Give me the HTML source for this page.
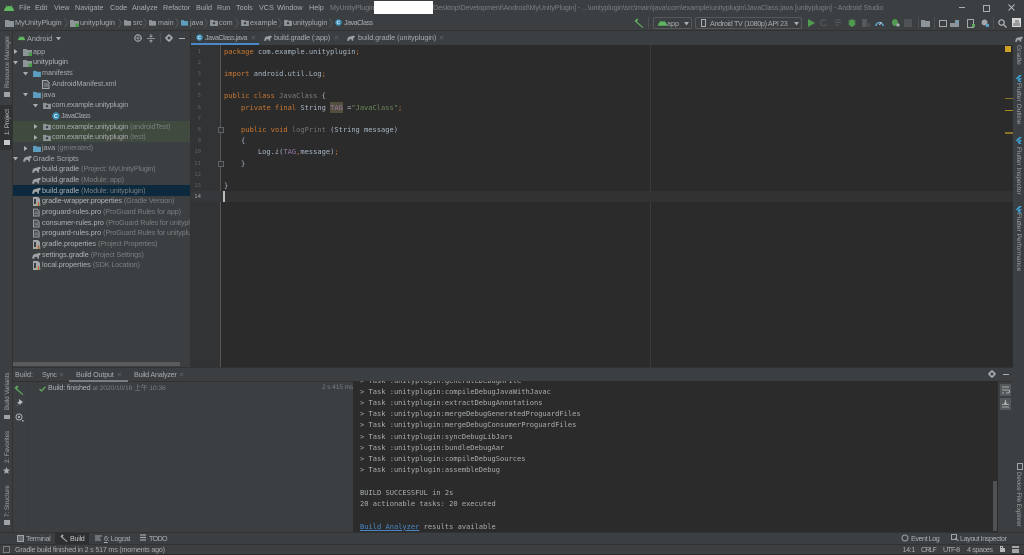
<!DOCTYPE html>
<html><head><meta charset="utf-8">
<style>
html,body{margin:0;padding:0;width:1024px;height:555px;overflow:hidden;background:#3c3f41}
#r{position:relative;width:1024px;height:555px;overflow:hidden;background:#3c3f41;font-family:"Liberation Sans","Noto Sans CJK TC",sans-serif;font-size:7.2px;color:#a9adaf;filter:blur(.35px)}
.b{position:absolute}
.t{position:absolute;white-space:nowrap;line-height:10px;height:10px}
.g{color:#7b7f81;letter-spacing:-.12px}
.m{position:absolute;white-space:pre;font-family:"DejaVu Sans Mono",monospace;font-size:7.05px;line-height:11.2px;color:#a9b7c6}
.k{color:#cc7832}.s{color:#6a8759}.p{color:#9876aa}
.v{position:absolute;white-space:nowrap;line-height:10px;transform-origin:0 0;font-size:6.6px;color:#a0a4a6}
.l{font-size:6.15px;left:2.5px;transform:rotate(-90deg)}
.n{position:absolute;left:191px;width:10px;text-align:right;font-family:"DejaVu Sans Mono",monospace;font-size:5.6px;line-height:11.2px;color:#5f6365}
svg{position:absolute;overflow:visible}
</style></head><body><div id="r">
<svg width="0" height="0" style="position:absolute"><defs>
<symbol id="fo" viewBox="0 0 9 8"><path d="M0 1h3.5l1 1H9v6H0z" fill="#8e9598"/></symbol>
<symbol id="fb" viewBox="0 0 9 8"><path d="M0 1h3.5l1 1H9v6H0z" fill="#5c9dc0"/></symbol>
<symbol id="mo" viewBox="0 0 9 8"><path d="M0 1h3.5l1 1H9v6H0z" fill="#8e9598"/><rect x="5.5" y="4.5" width="3.5" height="3.5" fill="#4c9a4c"/></symbol>
<symbol id="pk" viewBox="0 0 9 8"><path d="M0 1h3.5l1 1H9v6H0z" fill="#8e9598"/><circle cx="4.5" cy="4.8" r="1.4" fill="#3c3f41"/></symbol>
<symbol id="c" viewBox="0 0 8 8"><circle cx="4" cy="4" r="3.7" fill="#3f93b8"/><path d="M5.3 3A1.6 1.6 0 1 0 5.3 5" stroke="#d8e6ee" stroke-width=".9" fill="none"/></symbol>
<symbol id="e" viewBox="0 0 10 7"><path d="M0 7 1 3.5Q2 1.5 5 1.5 7 1 8 .5L10 1.5 9 3 8 3.4 7.6 7H6L5.8 5H3L2.6 7z" fill="#9ea3a6"/></symbol>
<symbol id="pr" viewBox="0 0 8 9"><path d="M0 0h5l2 2v7H0z" fill="#a3a7a9"/><rect x="3.6" y="6" width="1" height="3" fill="#c9a24a"/><rect x="5" y="5" width="1" height="4" fill="#b85a50"/><rect x="6.4" y="6.5" width="1" height="2.5" fill="#5a9e5a"/><rect x="1" y="2" width="2" height="5" fill="#3c3f41"/></symbol>
<symbol id="f" viewBox="0 0 8 9"><path d="M.5.5h4.5l2 2v6H.5z" fill="#4d5153" stroke="#a3a7a9"/><path d="M2 4h4M2 6h4" stroke="#a3a7a9" stroke-width=".7"/></symbol>
<symbol id="a" viewBox="0 0 10 6"><path d="M0 6A5 5 0 0 1 10 6z" fill="#5fb760"/><path d="M2 .5 3 2M8 .5 7 2" stroke="#5fb760" stroke-width=".7"/></symbol>
<symbol id="h" viewBox="0 0 10 10"><path d="M.5 3 3 .5l1.5 1L3 3.5l6.5 6-1 .5L2 4.5z" fill="currentColor"/></symbol>
<symbol id="fl" viewBox="0 0 8 8"><path d="M5 0h3L2.5 5.2 1 3.8zM5 3.6h3L5.3 6.3 8 8H5L3.4 6.4 3 5.6z" fill="#3ea5d9"/></symbol>
<symbol id="x" viewBox="0 0 6 6"><path d="M1 1l4 4M5 1 1 5" stroke="#5f6365" stroke-width=".8"/></symbol>
<symbol id="ch" viewBox="0 0 4 10"><path d="M.5 .5 3.5 5 .5 9.5" stroke="#5a5e60" stroke-width=".7" fill="none"/></symbol>
<symbol id="rt" viewBox="0 0 5 5"><path d="M1 0 4.5 2.5 1 5z" fill="#a9adaf"/></symbol>
<symbol id="dn" viewBox="0 0 5 5"><path d="M0 1h5L2.5 4.5z" fill="#a9adaf"/></symbol>
</defs></svg>

<!-- Title bar -->
<svg style="left:4px;top:5px" width="10" height="6"><use href="#a"/></svg>
<div class="t" style="left:19px;top:3px">File</div>
<div class="t" style="left:35px;top:3px">Edit</div>
<div class="t" style="left:54px;top:3px">View</div>
<div class="t" style="left:75px;top:3px">Navigate</div>
<div class="t" style="left:110px;top:3px">Code</div>
<div class="t" style="left:132px;top:3px">Analyze</div>
<div class="t" style="left:163px;top:3px">Refactor</div>
<div class="t" style="left:196px;top:3px">Build</div>
<div class="t" style="left:217px;top:3px">Run</div>
<div class="t" style="left:236px;top:3px">Tools</div>
<div class="t" style="left:259px;top:3px">VCS</div>
<div class="t" style="left:277px;top:3px">Window</div>
<div class="t" style="left:309px;top:3px">Help</div>
<div class="t g" style="left:330px;top:3px">MyUnityPlugin</div>
<div class="b" style="left:374px;top:1px;width:59px;height:13px;background:#fff"></div>
<div class="t g" style="left:433px;top:3px;letter-spacing:-.105px">Desktop\Development\Android\MyUnityPlugin] - ...\unityplugin\src\main\java\com\example\unityplugin\JavaClass.java [unityplugin] - Android Studio</div>
<div class="b" style="left:959px;top:7px;width:6px;height:1px;background:#a9adaf"></div>
<div class="b" style="left:983px;top:5px;width:5px;height:5px;border:1px solid #a9adaf"></div>
<svg style="left:1008px;top:4px" width="7" height="7" viewBox="0 0 7 7"><path d="M.5.5l6 6M6.5.5l-6 6" stroke="#b4b8ba"/></svg>

<!-- Nav bar -->
<div class="b" style="left:0;top:30px;width:1024px;height:1px;background:#323232"></div>
<svg style="left:5px;top:19px" width="9" height="8"><use href="#fo"/></svg>
<div class="t" style="left:15px;top:18px;font-size:7.3px">MyUnityPlugin</div>
<svg style="left:64px;top:18px" width="4" height="10"><use href="#ch"/></svg>
<svg style="left:70px;top:19px" width="9" height="8"><use href="#mo"/></svg>
<div class="t" style="left:80px;top:18px;font-size:7.3px">unityplugin</div>
<svg style="left:118px;top:18px" width="4" height="10"><use href="#ch"/></svg>
<svg style="left:124px;top:19px" width="7" height="7"><use href="#fo"/></svg>
<div class="t" style="left:133px;top:18px">src</div>
<svg style="left:143px;top:18px" width="4" height="10"><use href="#ch"/></svg>
<svg style="left:149px;top:19px" width="7" height="7"><use href="#fo"/></svg>
<div class="t" style="left:158px;top:18px">main</div>
<svg style="left:175px;top:18px" width="4" height="10"><use href="#ch"/></svg>
<svg style="left:181px;top:19px" width="7" height="7"><use href="#fb"/></svg>
<div class="t" style="left:190px;top:18px">java</div>
<svg style="left:204px;top:18px" width="4" height="10"><use href="#ch"/></svg>
<svg style="left:210px;top:19px" width="8" height="7"><use href="#pk"/></svg>
<div class="t" style="left:219px;top:18px">com</div>
<svg style="left:235px;top:18px" width="4" height="10"><use href="#ch"/></svg>
<svg style="left:241px;top:19px" width="8" height="7"><use href="#pk"/></svg>
<div class="t" style="left:250px;top:18px">example</div>
<svg style="left:278px;top:18px" width="4" height="10"><use href="#ch"/></svg>
<svg style="left:284px;top:19px" width="8" height="7"><use href="#pk"/></svg>
<div class="t" style="left:293px;top:18px">unityplugin</div>
<svg style="left:329px;top:18px" width="4" height="10"><use href="#ch"/></svg>
<svg style="left:335px;top:19px" width="7" height="7"><use href="#c"/></svg>
<div class="t" style="left:344px;top:18px;letter-spacing:-.5px">JavaClass</div>

<!-- Toolbar right -->
<svg style="left:634px;top:18px;color:#5fa85f" width="10" height="10"><use href="#h"/></svg>
<div class="b" style="left:648px;top:17px;width:1px;height:12px;background:#4d5153"></div>
<div class="b" style="left:653px;top:17px;width:39px;height:12px;border:1px solid #55595b;border-radius:2px;box-sizing:border-box"></div>
<svg style="left:658px;top:20px" width="9" height="6"><use href="#a"/></svg>
<div class="t" style="left:667px;top:18.5px">app</div>
<svg style="left:684px;top:21px" width="5" height="5"><use href="#dn"/></svg>
<div class="b" style="left:695px;top:17px;width:107px;height:12px;border:1px solid #55595b;border-radius:2px;box-sizing:border-box"></div>
<div class="b" style="left:701px;top:19px;width:3px;height:6px;border:1px solid #a9adaf"></div>
<div class="t" style="left:710px;top:18.5px;letter-spacing:-.33px">Android TV (1080p) API 23</div>
<svg style="left:794px;top:21px" width="5" height="5"><use href="#dn"/></svg>
<svg style="left:807px;top:19px" width="8" height="8" viewBox="0 0 8 8"><path d="M1 0 8 4 1 8z" fill="#4f9b4f"/></svg>
<svg style="left:820px;top:19px" width="8" height="8" viewBox="0 0 8 8"><path d="M6.5 5A3 3 0 1 1 6 2" stroke="#565a5c" fill="none"/></svg>
<svg style="left:835px;top:19px" width="8" height="8" viewBox="0 0 8 8"><path d="M0 1h6M0 3.5h6M0 6h4" stroke="#565a5c"/></svg>
<svg style="left:848px;top:18px" width="8" height="9" viewBox="0 0 8 9"><ellipse cx="4" cy="5" rx="3" ry="3.7" fill="#4f9b4f"/><path d="M0 3h8M0 6h8" stroke="#4f9b4f" stroke-width=".7"/></svg>
<svg style="left:862px;top:19px" width="8" height="8" viewBox="0 0 8 8"><rect x="0" y="0" width="5" height="8" fill="#565a5c"/><rect x="4" y="4" width="4" height="4" fill="#4a4e50"/></svg>
<svg style="left:875px;top:19px" width="9" height="7" viewBox="0 0 9 7"><path d="M1 7A3.5 3.5 0 0 1 8 7" stroke="#5b9fc4" stroke-width="1.6" fill="none"/><path d="M4.5 6 6 3" stroke="#d0d3d4"/></svg>
<svg style="left:891px;top:18px" width="9" height="9" viewBox="0 0 9 9"><ellipse cx="4" cy="4.5" rx="3" ry="3.5" fill="#4f9b4f"/><circle cx="7" cy="7" r="1.6" fill="#a9adaf"/></svg>
<div class="b" style="left:904px;top:19px;width:8px;height:8px;background:#4f5355"></div>
<div class="b" style="left:918px;top:17px;width:1px;height:12px;background:#4d5153"></div>
<svg style="left:921px;top:19px" width="9" height="8"><use href="#fo"/></svg>
<div class="b" style="left:934px;top:17px;width:1px;height:12px;background:#4d5153"></div>
<div class="b" style="left:939px;top:20px;width:6px;height:5px;border:1px solid #a3a7a9"></div>
<svg style="left:950px;top:19px" width="9" height="8" viewBox="0 0 9 8"><path d="M0 8V4h5V1h4v7z" fill="#8e9598"/><rect x="6" y="2" width="2" height="2" fill="#5b9fc4"/></svg>
<div class="b" style="left:967px;top:19px;width:5px;height:7px;border:1px solid #a3a7a9"></div>
<div class="b" style="left:972px;top:24px;width:3px;height:3px;background:#5fa85f"></div>
<svg style="left:981px;top:19px" width="8" height="8" viewBox="0 0 8 8"><circle cx="3.5" cy="3.5" r="3" fill="#a3a7a9"/><rect x="5" y="5" width="3" height="3" fill="#5b9fc4"/></svg>
<div class="b" style="left:993px;top:17px;width:1px;height:12px;background:#4d5153"></div>
<svg style="left:998px;top:19px" width="9" height="9" viewBox="0 0 9 9"><circle cx="3.5" cy="3.5" r="2.7" stroke="#c0c3c5" stroke-width="1.1" fill="none"/><path d="M5.5 5.5 8.5 8.5" stroke="#c0c3c5" stroke-width="1.2"/></svg>
<div class="b" style="left:1012px;top:18px;width:9px;height:9px;background:#d6d6d6"></div>
<div class="b" style="left:1014.5px;top:19.5px;width:4px;height:3px;background:#9a9a9a"></div>
<div class="b" style="left:1013px;top:23px;width:7px;height:3px;background:#9a9a9a"></div>

<!-- Left strip -->
<div class="b" style="left:12px;top:31px;width:1px;height:501px;background:#323232"></div>
<div class="b" style="left:0;top:105px;width:12px;height:45px;background:#2f3133"></div>
<div class="v l" style="top:88px">Resource Manager</div>
<div class="b" style="left:3.5px;top:92px;width:6px;height:5px;background:#a0a4a6"></div>
<div class="v l" style="top:135px;color:#c5c8ca">1: Project</div>
<div class="b" style="left:3.5px;top:140px;width:6px;height:5px;background:#c5c8ca"></div>
<div class="v l" style="top:410px">Build Variants</div>
<div class="b" style="left:3.5px;top:415px;width:6px;height:4px;background:#a0a4a6"></div>
<div class="v l" style="top:463px">2: Favorites</div>
<svg style="left:3px;top:466.5px" width="7" height="7" viewBox="0 0 10 10"><path d="M5 0l1.5 3.5 3.5.3-2.7 2.4.9 3.6L5 8 1.8 9.8l.9-3.6L0 3.8l3.5-.3z" fill="#a9adaf"/></svg>
<div class="v l" style="top:517px">7: Structure</div>
<div class="b" style="left:3.5px;top:520px;width:6px;height:5px;background:#a0a4a6"></div>

<!-- Project panel -->
<svg style="left:18px;top:35px" width="7" height="6"><use href="#a"/></svg>
<div class="t" style="left:27px;top:33.5px;font-size:7.3px">Android</div>
<svg style="left:56px;top:36px" width="5" height="5"><use href="#dn"/></svg>
<svg style="left:134px;top:34px" width="8" height="8" viewBox="0 0 8 8"><circle cx="4" cy="4" r="3.3" stroke="#a9adaf" fill="none"/><path d="M4 .7v6.6M.7 4h6.6" stroke="#a9adaf" stroke-width=".7"/></svg>
<svg style="left:147px;top:34px" width="8" height="9" viewBox="0 0 8 9"><path d="M0 4.5h8M4 0v3M4 6v3M2.5 1.8 4 3l1.5-1.2M2.5 7.2 4 6l1.5 1.2" stroke="#a9adaf" stroke-width=".8" fill="none"/></svg>
<div class="b" style="left:160px;top:33px;width:1px;height:10px;background:#4d5153"></div>
<svg style="left:165px;top:34px" width="8" height="8" viewBox="0 0 8 8"><circle cx="4" cy="4" r="2.3" stroke="#a9adaf" stroke-width="1.7" fill="none"/><path d="M4 0v1.5M4 6.5V8M0 4h1.5M6.5 4H8" stroke="#a9adaf" stroke-width="1.2"/></svg>
<div class="b" style="left:179px;top:38px;width:6px;height:1px;background:#a9adaf"></div>

<div class="b" style="left:13px;top:121px;width:177px;height:21px;background:#414a3f"></div>
<div class="b" style="left:13px;top:185px;width:177px;height:10.6px;background:#0d293e"></div>

<div class="b" style="left:0;top:.7px;width:190px;height:280px">
<svg style="left:13px;top:48px" width="5" height="5"><use href="#rt"/></svg>
<svg style="left:23px;top:47px" width="9" height="8"><use href="#mo"/></svg>
<div class="t" style="left:33px;top:46px;font-size:7.3px">app</div>
<svg style="left:13px;top:59px" width="5" height="5"><use href="#dn"/></svg>
<svg style="left:23px;top:58px" width="9" height="8"><use href="#mo"/></svg>
<div class="t" style="left:33px;top:56.5px;font-size:7.3px;color:#b6babc">unityplugin</div>
<svg style="left:23px;top:70px" width="5" height="5"><use href="#dn"/></svg>
<svg style="left:33px;top:69px" width="8" height="7"><use href="#fb"/></svg>
<div class="t" style="left:42px;top:67.5px">manifests</div>
<svg style="left:42px;top:79px" width="8" height="9"><use href="#f"/></svg>
<div class="t" style="left:52px;top:78px;font-size:7.1px">AndroidManifest.xml</div>
<svg style="left:23px;top:91px" width="5" height="5"><use href="#dn"/></svg>
<svg style="left:33px;top:90px" width="8" height="7"><use href="#fb"/></svg>
<div class="t" style="left:42px;top:89px">java</div>
<svg style="left:33px;top:102px" width="5" height="5"><use href="#dn"/></svg>
<svg style="left:43px;top:101px" width="8" height="7"><use href="#pk"/></svg>
<div class="t" style="left:52px;top:99.7px;letter-spacing:-.13px">com.example.unityplugin</div>
<svg style="left:52px;top:111px" width="8" height="8"><use href="#c"/></svg>
<div class="t" style="left:61px;top:110.3px;letter-spacing:-.45px">JavaClass</div>
<svg style="left:33px;top:123px" width="5" height="5"><use href="#rt"/></svg>
<svg style="left:43px;top:122px" width="8" height="7"><use href="#pk"/></svg>
<div class="t" style="left:52px;top:121px;letter-spacing:-.13px">com.example.unityplugin <span class="g">(androidTest)</span></div>
<svg style="left:33px;top:134px" width="5" height="5"><use href="#rt"/></svg>
<svg style="left:43px;top:133px" width="8" height="7"><use href="#pk"/></svg>
<div class="t" style="left:52px;top:131.6px;letter-spacing:-.13px">com.example.unityplugin <span class="g">(test)</span></div>
<svg style="left:23px;top:145px" width="5" height="5"><use href="#rt"/></svg>
<svg style="left:33px;top:144px" width="8" height="7"><use href="#fb"/></svg>
<div class="t" style="left:42px;top:142.3px">java <span class="g">(generated)</span></div>
<svg style="left:13px;top:155px" width="5" height="5"><use href="#dn"/></svg>
<svg style="left:23px;top:154px" width="9" height="7"><use href="#e"/></svg>
<div class="t" style="left:33px;top:153px">Gradle Scripts</div>
<svg style="left:32px;top:165px" width="9" height="7"><use href="#e"/></svg>
<div class="t" style="left:42px;top:163.6px;color:#b0b4b6">build.gradle <span class="g">(Project: MyUnityPlugin)</span></div>
<svg style="left:32px;top:176px" width="9" height="7"><use href="#e"/></svg>
<div class="t" style="left:42px;top:174.3px;color:#b0b4b6">build.gradle <span class="g">(Module: app)</span></div>
<svg style="left:32px;top:186px" width="9" height="7"><use href="#e"/></svg>
<div class="t" style="left:42px;top:185px;color:#b0b4b6">build.gradle <span class="g">(Module: unityplugin)</span></div>
<svg style="left:33px;top:196px" width="8" height="9"><use href="#pr"/></svg>
<div class="t" style="left:42px;top:195.6px;color:#b0b4b6;letter-spacing:-.08px">gradle-wrapper.properties <span class="g">(Gradle Version)</span></div>
<svg style="left:33px;top:207px" width="7" height="9"><use href="#f"/></svg>
<div class="t" style="left:42px;top:206.3px;color:#b0b4b6">proguard-rules.pro <span class="g">(ProGuard Rules for app)</span></div>
<svg style="left:33px;top:218px" width="7" height="9"><use href="#f"/></svg>
<div class="t" style="left:42px;top:217px;color:#b0b4b6;width:148px;overflow:hidden">consumer-rules.pro <span class="g">(ProGuard Rules for unityplugin)</span></div>
<svg style="left:33px;top:228px" width="7" height="9"><use href="#f"/></svg>
<div class="t" style="left:42px;top:227.6px;color:#b0b4b6;width:148px;overflow:hidden">proguard-rules.pro <span class="g">(ProGuard Rules for unityplugin)</span></div>
<svg style="left:33px;top:239px" width="8" height="9"><use href="#pr"/></svg>
<div class="t" style="left:42px;top:238.3px;color:#b0b4b6">gradle.properties <span class="g">(Project Properties)</span></div>
<svg style="left:32px;top:251px" width="9" height="7"><use href="#e"/></svg>
<div class="t" style="left:42px;top:249px;color:#b0b4b6">settings.gradle <span class="g">(Project Settings)</span></div>
<svg style="left:33px;top:260px" width="8" height="9"><use href="#pr"/></svg>
<div class="t" style="left:42px;top:259.6px;color:#b0b4b6">local.properties <span class="g">(SDK Location)</span></div>
</div>
<div class="b" style="left:13px;top:362px;width:167px;height:4px;background:#595c5e"></div>

<!-- Tabs -->
<div class="b" style="left:190px;top:31px;width:1px;height:336px;background:#323232"></div>
<div class="b" style="left:191px;top:31px;width:68px;height:14px;background:#3a3d3f"></div>
<div class="b" style="left:191px;top:43px;width:68px;height:2px;background:#4a88c7"></div>
<svg style="left:196px;top:34px" width="7" height="7"><use href="#c"/></svg>
<div class="t" style="left:205px;top:33px;letter-spacing:-.45px">JavaClass.java</div>
<svg style="left:251px;top:35px" width="5" height="5"><use href="#x"/></svg>
<svg style="left:264px;top:35px" width="8" height="6"><use href="#e"/></svg>
<div class="t" style="left:274px;top:33px;letter-spacing:-.1px">build.gradle (:app)</div>
<svg style="left:334px;top:35px" width="5" height="5"><use href="#x"/></svg>
<svg style="left:347px;top:35px" width="8" height="6"><use href="#e"/></svg>
<div class="t" style="left:358px;top:33px">build.gradle (unityplugin)</div>
<svg style="left:439px;top:35px" width="5" height="5"><use href="#x"/></svg>

<!-- Editor -->
<div class="b" style="left:191px;top:45px;width:822px;height:322px;background:#2b2b2b"></div>
<div class="b" style="left:191px;top:45px;width:30px;height:322px;background:#313335"></div>
<div class="b" style="left:220px;top:45px;width:1px;height:322px;background:#555"></div>
<div class="b" style="left:650px;top:45px;width:1px;height:322px;background:#393b3c"></div>
<div class="b" style="left:191px;top:191px;width:822px;height:11px;background:#323232"></div>
<div class="b" style="left:191px;top:191px;width:30px;height:11px;background:#35373a"></div>
<div class="b" style="left:223px;top:191px;width:1.6px;height:11px;background:#bbb"></div>
<div class="n" style="top:46.5px">1<br>2<br>3<br>4<br>5<br>6<br>7<br>8<br>9<br>10<br>11<br>12<br>13<br><span style="color:#a4a3a3">14</span></div>
<div class="b" style="left:218px;top:127px;width:4px;height:4px;border:.7px solid #606366;background:#313335"></div>
<div class="b" style="left:218px;top:161px;width:4px;height:4px;border:.7px solid #606366;background:#313335"></div>
<div class="b" style="left:330px;top:102px;width:13px;height:11px;background:#52503a"></div>
<div class="m" style="left:224px;top:45.5px"><span class="k">package</span> com.example.unityplugin<span class="k">;</span>

<span class="k">import</span> android.util.Log<span class="k">;</span>

<span class="k">public class</span> <span style="color:#7a7e80">JavaClass</span> {
    <span class="k">private final</span> String <span class="p">TAG</span> =<span class="s">"JavaClass"</span><span class="k">;</span>

    <span class="k">public void</span> <span style="color:#6f7375">logPrint</span> (String message)
    {
        Log.<i>i</i>(<span class="p">TAG</span><span class="k">,</span>message)<span class="k">;</span>
    }

}</div>
<div class="b" style="left:1005px;top:46px;width:6px;height:6px;background:#c9a227"></div>
<div class="b" style="left:1005px;top:98px;width:8px;height:1.2px;background:#8a7428"></div>
<div class="b" style="left:1005px;top:110px;width:8px;height:1.2px;background:#a88a1c"></div>
<div class="b" style="left:1005px;top:132px;width:8px;height:1.5px;background:#8a7428"></div>

<!-- Right strip -->
<div class="b" style="left:1013px;top:31px;width:11px;height:501px;background:#3c3f41"></div>
<svg style="left:1015px;top:36px" width="8" height="6"><use href="#e"/></svg>
<div class="v" style="left:1022.5px;top:45px;transform:rotate(90deg)">Gradle</div>
<svg style="left:1015px;top:75px" width="7" height="7"><use href="#fl"/></svg>
<div class="v" style="left:1022.5px;top:83px;transform:rotate(90deg)">Flutter Outline</div>
<svg style="left:1015px;top:137px" width="7" height="7"><use href="#fl"/></svg>
<div class="v" style="left:1022.5px;top:147px;transform:rotate(90deg)">Flutter Inspector</div>
<svg style="left:1015px;top:206px" width="7" height="7"><use href="#fl"/></svg>
<div class="v" style="left:1022.5px;top:213px;transform:rotate(90deg)">Flutter Performance</div>
<div class="b" style="left:1017px;top:463px;width:4px;height:5px;border:1px solid #a0a4a6"></div>
<div class="v" style="left:1022.5px;top:472px;transform:rotate(90deg);font-size:6.1px">Device File Explorer</div>

<!-- Build panel -->
<div class="b" style="left:13px;top:367px;width:1000px;height:14px;background:#3c3f41;border-top:1px solid #323232;box-sizing:border-box"></div>
<div class="b" style="left:13px;top:381px;width:1000px;height:1px;background:#323232"></div>
<div class="t" style="left:15px;top:369.5px">Build:</div>
<div class="t" style="left:42px;top:369.5px;letter-spacing:-.35px">Sync</div>
<svg style="left:59px;top:372px" width="5" height="5"><use href="#x"/></svg>
<div class="t" style="left:76px;top:369.5px;letter-spacing:-.15px">Build Output</div>
<svg style="left:117px;top:372px" width="5" height="5"><use href="#x"/></svg>
<div class="b" style="left:69px;top:380px;width:59px;height:1.5px;background:#7a7e80"></div>
<div class="t" style="left:134px;top:369.5px;letter-spacing:-.2px">Build Analyzer</div>
<svg style="left:179px;top:372px" width="5" height="5"><use href="#x"/></svg>
<svg style="left:988px;top:370px" width="8" height="8" viewBox="0 0 8 8"><circle cx="4" cy="4" r="2.3" stroke="#a9adaf" stroke-width="1.7" fill="none"/><path d="M4 0v1.5M4 6.5V8M0 4h1.5M6.5 4H8" stroke="#a9adaf" stroke-width="1.2"/></svg>
<div class="b" style="left:1003px;top:374px;width:6px;height:1px;background:#a9adaf"></div>

<div class="b" style="left:27px;top:382px;width:1px;height:150px;background:#383b3d"></div>
<svg style="left:14px;top:385px;color:#5fa85f" width="10" height="10"><use href="#h"/></svg>
<svg style="left:15px;top:399px" width="8" height="8" viewBox="0 0 8 8"><path d="M4 0l4 3-1.3 1L5 6 4 4.5 1 8l2.5-3.5L2 3.5l2-.7z" fill="#b4b8ba"/></svg>
<svg style="left:15px;top:413px" width="9" height="9" viewBox="0 0 9 9"><circle cx="4" cy="4" r="3" stroke="#b0b4b6" fill="none"/><circle cx="4" cy="4" r="1.1" fill="#b0b4b6"/><rect x="7" y="7" width="1.5" height="1.5" fill="#b0b4b6"/></svg>
<svg style="left:39px;top:386px" width="7" height="6" viewBox="0 0 7 6"><path d="M.5 3 2.5 5 6.5.7" stroke="#5fa85f" stroke-width="1.3" fill="none"/></svg>
<div class="t" style="left:48px;top:383px;color:#b0b4b6;letter-spacing:-.15px">Build: finished <span class="g" style="font-size:6.8px">at 2020/10/16 上午 10:36</span></div>
<div class="t g" style="left:322px;top:383px;font-size:6.6px">2 s 415 ms</div>
<div class="b" style="left:353px;top:381px;width:645px;height:151px;background:#2b2b2b;overflow:hidden">
<div class="m" style="left:7px;top:-6.5px;color:#a9adaf;font-size:7.05px;line-height:11.23px">&gt; Task :unityplugin:generateDebugRFile
&gt; Task :unityplugin:compileDebugJavaWithJavac
&gt; Task :unityplugin:extractDebugAnnotations
&gt; Task :unityplugin:mergeDebugGeneratedProguardFiles
&gt; Task :unityplugin:mergeDebugConsumerProguardFiles
&gt; Task :unityplugin:syncDebugLibJars
&gt; Task :unityplugin:bundleDebugAar
&gt; Task :unityplugin:compileDebugSources
&gt; Task :unityplugin:assembleDebug

BUILD SUCCESSFUL in 2s
20 actionable tasks: 20 executed

<span style="color:#4a88c7;text-decoration:underline">Build Analyzer</span> results available</div>
</div>
<div class="b" style="left:993px;top:481px;width:4px;height:50px;background:#4f5254"></div>
<div class="b" style="left:1000px;top:384px;width:11px;height:12px;background:#55595b"></div>
<svg style="left:1002px;top:386px" width="7" height="8" viewBox="0 0 7 8"><path d="M0 1h7M0 4h6a1.3 1.3 0 0 1 0 3H4M0 7h2" stroke="#c0c3c5" stroke-width=".8" fill="none"/></svg>
<div class="b" style="left:1000px;top:398px;width:11px;height:12px;background:#55595b"></div>
<svg style="left:1002px;top:400px" width="7" height="8" viewBox="0 0 7 8"><path d="M0 4.5h7M0 7h7M3.5 0v4M2 2.5 3.5 4 5 2.5" stroke="#c0c3c5" stroke-width=".8" fill="none"/></svg>

<!-- Bottom tool bar -->
<div class="b" style="left:0;top:532px;width:1024px;height:1px;background:#323232"></div>
<div class="b" style="left:55px;top:533px;width:34px;height:11px;background:#2d2f30"></div>
<div class="b" style="left:17px;top:535px;width:5px;height:5px;border:1px solid #a0a4a6;background:#6a6e70"></div>
<div class="t" style="left:26px;top:533.5px;letter-spacing:-.35px">Terminal</div>
<svg style="left:60px;top:534px;color:#b0b4b6" width="8" height="8"><use href="#h"/></svg>
<div class="t" style="left:70px;top:533.5px;color:#c0c3c5;letter-spacing:-.3px">Build</div>
<svg style="left:95px;top:535px" width="7" height="6" viewBox="0 0 7 6"><path d="M0 1h7M0 3h5M0 5h6" stroke="#a0a4a6"/></svg>
<div class="t" style="left:104px;top:533.5px;letter-spacing:-.4px"><u>6</u>: Logcat</div>
<svg style="left:140px;top:534px" width="6" height="7" viewBox="0 0 6 7"><path d="M0 1h6M0 3.5h6M0 6h6" stroke="#a0a4a6" stroke-width="1.2"/></svg>
<div class="t" style="left:149px;top:533.5px;letter-spacing:-.7px">TODO</div>
<svg style="left:901px;top:534px" width="8" height="8" viewBox="0 0 8 8"><circle cx="4" cy="4" r="3" stroke="#a0a4a6" fill="none"/></svg>
<div class="t" style="left:911px;top:533.5px;letter-spacing:-.45px">Event Log</div>
<svg style="left:951px;top:534px" width="8" height="8" viewBox="0 0 8 8"><path d="M.5.5h5v5h-5zM4 4l3.5 3" stroke="#a0a4a6" fill="none"/></svg>
<div class="t" style="left:960px;top:533.5px;letter-spacing:-.42px">Layout Inspector</div>

<!-- Status bar -->
<div class="b" style="left:0;top:544px;width:1024px;height:1px;background:#323232"></div>
<div class="b" style="left:0;top:554px;width:1024px;height:1px;background:#2b2b2b"></div>
<div class="b" style="left:3px;top:546px;width:5px;height:5px;border:1px solid #7b7f81"></div>
<div class="t" style="left:15px;top:544.5px;letter-spacing:-.22px">Gradle build finished in 2 s 517 ms (moments ago)</div>
<div class="t" style="left:902.5px;top:544.5px;letter-spacing:-.4px">14:1</div>
<div class="t" style="left:921px;top:544.5px;letter-spacing:-1px">CRLF</div>
<div class="t" style="left:943px;top:544.5px;letter-spacing:-.8px">UTF-8</div>
<div class="t" style="left:967px;top:544.5px;letter-spacing:-.4px">4 spaces</div>
<div class="b" style="left:1000px;top:548px;width:5px;height:4px;background:#b4b8ba"></div>
<div class="b" style="left:1000px;top:546px;width:3px;height:2px;border:1px solid #b4b8ba;border-bottom:0;box-sizing:border-box"></div>
<div class="b" style="left:1012px;top:546px;width:7px;height:7px;background:#a3a7a9"></div>
<div class="b" style="left:1012px;top:548px;width:7px;height:1px;background:#3c3f41"></div>
</div></body></html>
